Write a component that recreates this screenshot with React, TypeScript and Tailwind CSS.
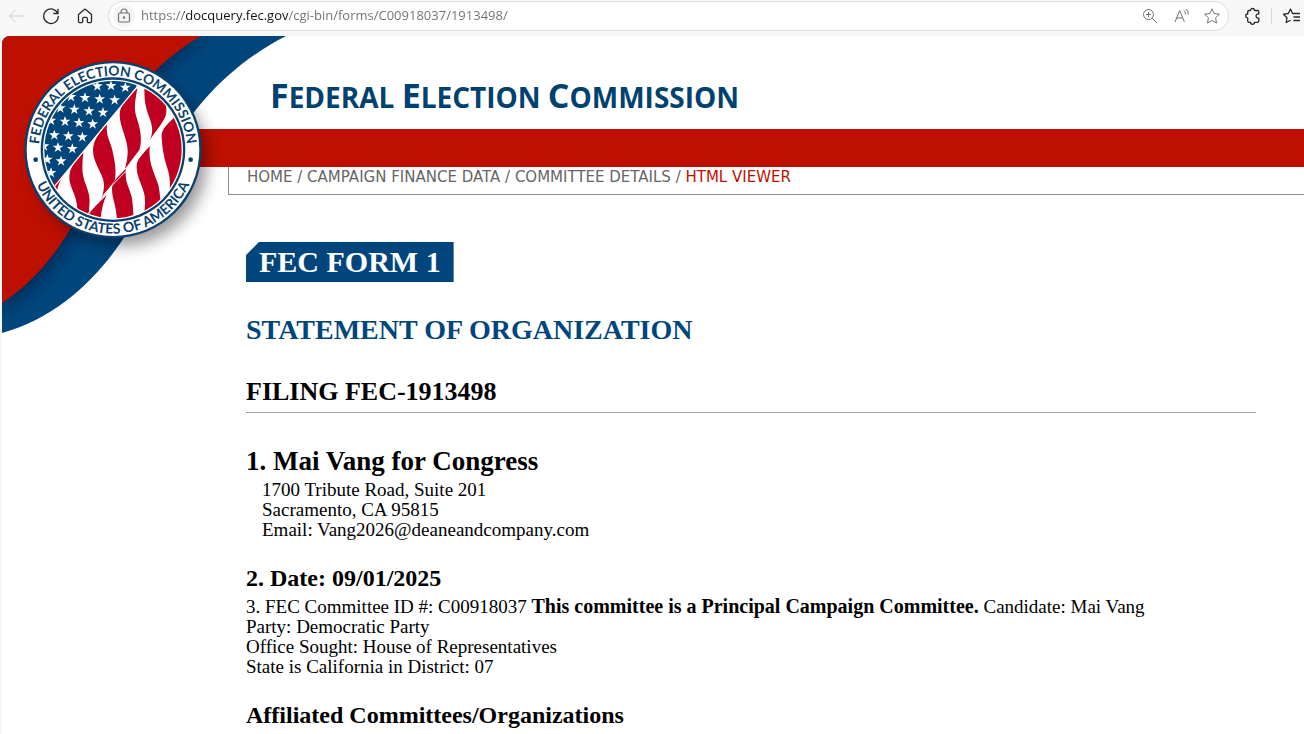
import React from 'react';

const STARS: [number, number][] = [
  [247, 108], [288, 107], [331, 112],
  [168, 140], [210, 143], [254, 147], [299, 150],
  [136, 174], [178, 178], [222, 183], [264, 187],
  [108, 211], [150, 214], [192, 218], [233, 222],
  [76, 250], [118, 255], [160, 258], [202, 261],
  [87, 288], [129, 292], [172, 296],
  [97, 328], [138, 333],
  [108, 368],
];

const STAR = 'M0 -16L4 -5L16 -5L6 3L10 14L0 7L-10 14L-6 3L-16 -5L-4 -5Z';

// Round commission seal, drawn on a 600 unit grid
function Seal() {
  return (
    <g>
      <circle cx="294" cy="299" r="266" fill="#0b3f6e" />
      <circle cx="294" cy="299" r="259" fill="#ffffff" />
      <circle cx="294" cy="299" r="217" fill="#0b3f6e" />
      <circle cx="294" cy="299" r="210" fill="#ffffff" />
      <g clipPath="url(#seal-disk)">
        <path d="M365 112L122 405L40 440V60H365Z" fill="#00467a" />
        {STARS.map(([x, y]) => (
          <path key={`${x}-${y}`} d={STAR} transform={`translate(${x} ${y})`} fill="#ffffff" />
        ))}
        <g fill="#c00020">
          <path d="M116 402L156 362C142 382 132 392 126 424Z" />
          <path d="M205 303C180 334 163 354 163 383C163 413 187 436 187 480L222 500C220 480 226 460 223 440C220 416 206 395 203 368C201 340 204 326 205 303Z" />
          <path d="M276 221C250 252 234 272 234 302C234 340 268 376 267 404C267 420 264 432 258 447L299 392C306 360 298 330 292 300C286 270 272 262 276 221Z" />
          <path d="M367 114C336 146 314 166 314 194C314 230 338 266 338 304C338 326 334 340 330 357L373 300C384 270 374 230 366 206C354 172 362 150 367 114Z" />
          <path d="M389 100C386 150 392 172 402 200C412 226 416 242 405 270C422 240 452 214 454 186C456 162 446 140 430 110Z" />
          <path d="M500 180L475 203C452 226 439 240 440 260C441 290 446 320 456 352C464 376 466 392 464 420L520 360Z" />
          <path d="M405 288C378 316 364 330 365 352C366 386 384 408 389 438C391 456 390 470 386 510L440 490C436 460 436 430 430 404C420 376 408 350 405 326C403 310 403 300 405 288Z" />
          <path d="M332 356C306 384 291 394 291 418C291 446 304 466 306 510H356C354 480 354 460 350 440C342 412 334 400 333 384C332 372 332 366 332 356Z" />
          <path d="M275 434C256 456 230 474 218 500L256 510C260 480 264 456 275 434Z" />
        </g>
        <path d="M494 186C440 234 405 280 376 318C336 366 290 398 214 498" fill="none" stroke="#ffffff" strokeWidth="3" />
        <path d="M370 106L116 412" stroke="#ffffff" strokeWidth="4" />
      </g>
      <circle cx="62" cy="329" r="7" fill="#0b3f6e" />
      <circle cx="527" cy="329" r="7" fill="#0b3f6e" />
      <path id="seal-top" d="M72 299A222 222 0 0 1 516 299" fill="none" />
      <path id="seal-bottom" d="M42 299A252 252 0 0 0 546 299" fill="none" />
      <g className="font-['Lato',sans-serif] font-bold" fill="#0b3f6e" textAnchor="middle">
        <text fontSize="41">
          <textPath href="#seal-top" startOffset="50%">FEDERAL ELECTION COMMISSION</textPath>
        </text>
        <text fontSize="42">
          <textPath href="#seal-bottom" startOffset="50%">UNITED STATES OF AMERICA</textPath>
        </text>
      </g>
    </g>
  );
}

function CornerArt() {
  return (
    <svg className="absolute left-0 top-0" width="290" height="306" viewBox="2 36 290 306" role="img" aria-label="Federal Election Commission seal">
      <defs>
        <clipPath id="seal-disk">
          <circle cx="294" cy="299" r="206" />
        </clipPath>
        <clipPath id="ribbon">
          <path d="M2 36H286C235 62 190 105 162 165C140 220 92 308 2 333Z" />
        </clipPath>
        <filter id="soft" x="-30%" y="-30%" width="160%" height="160%">
          <feGaussianBlur stdDeviation="8" />
        </filter>
      </defs>
      <g clipPath="url(#ribbon)">
        <rect x="2" y="36" width="290" height="306" fill="#00467c" />
        <path d="M2 36H204C168 60 140 88 122 120C100 190 70 264 2 310Z" fill="#001f45" opacity="0.7" filter="url(#soft)" />
        <path d="M2 36H201C166 56 140 84 122 114C98 180 66 262 2 303Z" fill="#bd1000" />
      </g>
      <circle cx="121" cy="160" r="86" fill="#000000" opacity="0.4" filter="url(#soft)" />
      <g transform="translate(15 50) scale(0.3333)">
        <Seal />
      </g>
    </svg>
  );
}

const ICON = 'size-5 fill-none stroke-current';

function BrowserBar() {
  return (
    <div className="flex h-9 items-center bg-[#f7f7f7] pb-1 pl-1.5 text-[#2b2b2b]">
      <button aria-label="Back" className="text-[#cfcfcf]">
        <svg className={ICON} viewBox="0 0 20 20"><path d="M18 10H3.500M9.500 4L3.500 10L9.500 16" /></svg>
      </button>
      <button aria-label="Refresh" className="ml-[15px]">
        <svg className={ICON} viewBox="0 0 20 20" strokeWidth="1.300"><path d="M16.800 7.500A7.300 7.300 0 1 0 17.300 10M17 2.800V7.500H12.300" /></svg>
      </button>
      <button aria-label="Home" className="ml-[14px]">
        <svg className={ICON} viewBox="0 0 20 20" strokeWidth="1.300" strokeLinejoin="round"><path d="M3.500 8.600L9.300 3.500Q10 3 10.700 3.500L16.500 8.600V15.600Q16.500 16.600 15.500 16.600H13.300Q12.300 16.600 12.300 15.600V12.400Q12.300 11.400 11.300 11.400H8.700Q7.700 11.400 7.700 12.400V15.600Q7.700 16.600 6.700 16.600H4.500Q3.500 16.600 3.500 15.600Z" /></svg>
      </button>
      <div className="ml-[13px] flex h-[30px] flex-1 items-center gap-1.5 rounded-full border border-[#dcdcdc] bg-white pl-1 pr-1.5 text-[#707070]">
        <button aria-label="Site information" className="flex size-[22px] items-center justify-center rounded-full bg-[#f4f4f4]">
          <svg className={ICON} viewBox="0 0 20 20" strokeWidth="1.200"><rect x="4.500" y="7" width="11" height="9" rx="1.500" /><path d="M7 7V6A3 3 0 0 1 13 6V7" /><circle cx="10" cy="11.500" r="0.600" fill="currentColor" /></svg>
        </button>
        <input
          aria-label="Address"
          defaultValue="https://docquery.fec.gov/cgi-bin/forms/C00918037/1913498/"
          className="min-w-0 flex-1 bg-[linear-gradient(90deg,#6f6f6f_43px,#111111_43px,#111111_147px,#6f6f6f_147px)] bg-clip-text font-['Open_Sans',sans-serif] text-[13px] text-transparent outline-none"
        />
        <button aria-label="Zoom">
          <svg className={ICON} viewBox="0 0 20 20"><circle cx="8.500" cy="8.500" r="5" /><path d="M12.200 12.200L17 17M8.500 6V11M6 8.500H11" /></svg>
        </button>
        <button aria-label="Read aloud" className="ml-1.5">
          <svg className={ICON} viewBox="0 0 20 20"><path d="M3 16L7.700 4.500L12.400 16M4.700 12H10.700M12 4.500Q13.700 6 13.500 8.500M14 3Q16.500 5 16.300 8.500" /></svg>
        </button>
        <button aria-label="Add to favorites" className="ml-1">
          <svg className={ICON} viewBox="0 0 20 20" strokeLinejoin="round"><path d="M10 2.800L12.200 7.500L17.400 8.200L13.600 11.800L14.500 17L10 14.500L5.500 17L6.400 11.800L2.600 8.200L7.800 7.500Z" /></svg>
        </button>
      </div>
      <button aria-label="Extensions" className="ml-[14px]">
        <svg className={ICON} viewBox="0 0 20 20" strokeWidth="1.300" strokeLinejoin="round"><path d="M7.500 4.500A2 2 0 0 1 11.500 4.500H14.500Q15.800 4.500 15.800 5.800V8A2.100 2.100 0 1 0 15.800 12V15Q15.800 16.300 14.500 16.300H11.500A2 2 0 0 1 7.500 16.300H6Q4.700 16.300 4.700 15V12A2 2 0 0 1 4.700 8V5.800Q4.700 4.500 6 4.500Z" /></svg>
      </button>
      <div className="ml-2 h-4 w-px bg-[#d8d8d8]" />
      <button aria-label="Favorites" className="ml-2.5 mr-0.5">
        <svg className={ICON} viewBox="0 0 20 20" strokeWidth="1.300" strokeLinejoin="round"><path d="M12 7.500H10.500L8.500 3L6.300 7.500L1.500 8.200L5 11.700L4.200 16.500L8.500 14.200M12 7.500H18M11.500 11H18M11.500 14.500H18" /></svg>
      </button>
    </div>
  );
}

export default function App() {
  return (
    <div className="flex min-h-screen flex-col bg-[#f7f7f7]">
      <BrowserBar />

      <div className="relative ml-0.5 flex-1 overflow-hidden rounded-tl-lg bg-white font-['Liberation_Serif',serif] text-black">
        <header>
          <div className="flex h-[93px] items-end pb-2.5 pl-[268px]">
            <p className="font-['Open_Sans',sans-serif] text-[28px] leading-[44px] font-bold text-[#00426f] uppercase">
              <span className="text-[34px]">F</span>ederal <span className="text-[34px]">E</span>lection <span className="text-[34px]">C</span>ommission
            </p>
          </div>
          <div className="ml-[190px] h-[38px] bg-[#bd1000]" />
          <nav aria-label="Breadcrumb" className="ml-[226px] h-7 border-b border-l border-[#8c8c8c] pl-[18px] font-['DejaVu_Sans',sans-serif] text-[15px] leading-5 text-[#666666]">
            <a href="#home">HOME</a> / <a href="#data">CAMPAIGN FINANCE DATA</a> / <a href="#committee">COMMITTEE DETAILS</a> /{' '}
            <span className="text-[#bd1000]">HTML VIEWER</span>
          </nav>
          <CornerArt />
        </header>

        <main className="mr-12 ml-[244px] pt-[47px] text-[19px] leading-5">
          <h1 className="w-fit bg-[#00467c] px-[13px] text-[30px] leading-10 font-bold text-white [clip-path:polygon(13px_0,100%_0,100%_100%,0_100%,0_13px)]">
            FEC FORM 1
          </h1>
          <h2 className="mt-8 text-[28px] leading-8 font-bold text-[#00467c]">STATEMENT OF ORGANIZATION</h2>
          <h3 className="mt-[30px] border-b border-[#a0a0a0] pb-1 text-[26px] leading-8 font-bold">FILING FEC-1913498</h3>

          <h3 className="mt-8 text-[27px] leading-8 font-bold">1. Mai Vang for Congress</h3>
          <address className="mt-[3px] pl-4 not-italic">
            1700 Tribute Road, Suite 201<br />
            Sacramento, CA 95815<br />
            Email: Vang2026@deaneandcompany.com
          </address>

          <h4 className="mt-6 text-[24px] leading-7 font-bold">2. Date: 09/01/2025</h4>
          <p className="mt-1">
            3. FEC Committee ID #: C00918037 <b className="text-[20px]">This committee is a Principal Campaign Committee.</b> Candidate: Mai Vang<br />
            Party: Democratic Party<br />
            Office Sought: House of Representatives<br />
            State is California in District: 07
          </p>

          <h4 className="mt-6 text-[24px] leading-7 font-bold">Affiliated Committees/Organizations</h4>
        </main>
      </div>
    </div>
  );
}
